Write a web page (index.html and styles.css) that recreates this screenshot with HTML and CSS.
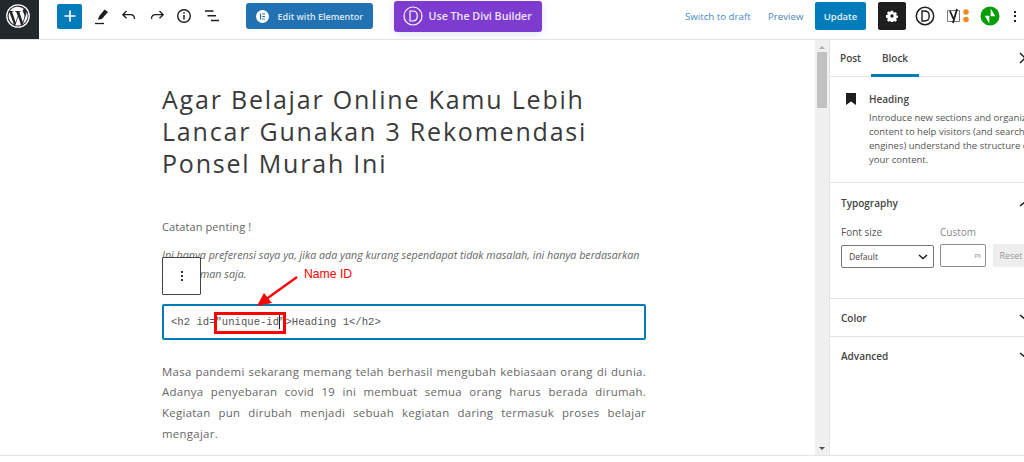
FILE: index.html
```html
<!DOCTYPE html>
<html lang="id">
<head>
<meta charset="utf-8">
<title>Edit Post</title>
<link rel="stylesheet" href="styles.css">
</head>
<body>
<div class="app">
  <header class="topbar">
    <div class="wp-logo">
      <svg width="26" height="26" viewBox="0 0 26 26"><circle cx="13" cy="13" r="11.2" fill="none" stroke="#fff" stroke-width="1.3"/><path fill="#fff" d="M3.6 13c0 3.7 2.2 6.9 5.3 8.500L4.400 9.200A9.400 9.400 0 0 0 3.600 13zm15.800-.5c0-1.200-.4-2-.8-2.600-.5-.8-.9-1.400-.9-2.100 0-.8.6-1.500 1.400-1.500h.1A9.400 9.400 0 0 0 5 8h.6c1 0 2.500-.1 2.500-.1.500 0 .6.700.1.800 0 0-.5.100-1.100.1l3.500 10.400 2.100-6.300-1.500-4.100c-.5 0-1-.1-1-.1-.5 0-.4-.8.1-.8 0 0 1.600.1 2.500.1 1 0 2.500-.1 2.500-.1.500 0 .6.700.1.800 0 0-.5.100-1.100.1l3.500 10.300 1-3.200c.4-1.300.7-2.200.7-3zM13.200 13.800l-2.900 8.400a9.400 9.400 0 0 0 5.800-.2l-.1-.1zm8.200-5.400c0 .3.100.6.100 1 0 1-.2 2-.7 3.300l-2.900 8.400a9.400 9.400 0 0 0 3.500-12.700z"/></svg>
    </div>
    <div class="tools">
      <button class="add-btn" aria-label="Add block"><svg width="14" height="14" viewBox="0 0 14 14"><path d="M7 1.500v11M1.500 7h11" stroke="#fff" stroke-width="1.700"/></svg></button>
      <span class="tool tool-first"><svg width="16" height="18" viewBox="0 0 16 18"><path fill="#1e1e1e" d="M10.600 2.500 14 5 8.300 11.600c-.6.700-2.200 1-4.300 1.200.4-1.900 1-3.300 1.500-4z"/><path stroke="#1e1e1e" stroke-width="1.300" d="M1 16.500h9"/></svg></span>
      <span class="tool"><svg width="16" height="14" viewBox="0 0 16 14"><path fill="none" stroke="#1e1e1e" stroke-width="1.300" d="M5.500 2 1.800 5.700l3.700 3.600M2 5.700h7.500c2.600 0 4 1.500 4 4.300"/></svg></span>
      <span class="tool"><svg width="16" height="14" viewBox="0 0 16 14"><path fill="none" stroke="#1e1e1e" stroke-width="1.300" d="M10.500 2l3.700 3.700-3.700 3.600M14 5.700H6.500c-2.600 0-4 1.500-4 4.300"/></svg></span>
      <span class="tool"><svg width="16" height="16" viewBox="0 0 16 16"><circle cx="8" cy="8" r="6.300" fill="none" stroke="#1e1e1e" stroke-width="1.400"/><path d="M8 7v4.500M8 4.200v1.600" stroke="#1e1e1e" stroke-width="1.500"/></svg></span>
      <span class="tool"><svg width="16" height="14" viewBox="0 0 16 14"><path d="M1 2h8.500M3.500 6.800h8.500M7 11.500h8" stroke="#1e1e1e" stroke-width="1.400"/></svg></span>
    </div>
    <button class="elementor-btn">
      <svg width="13" height="13" viewBox="0 0 13 13"><circle cx="6.500" cy="6.500" r="6.500" fill="#fff"/><path fill="#2271b1" d="M4 3.500h1.100v6H4zM6.200 3.500H9v1.100H6.200zM6.200 6H9v1.100H6.200zM6.200 8.400H9v1.100H6.200z"/></svg>
      <span>Edit with Elementor</span>
    </button>
    <button class="divi-btn">
      <svg width="20" height="20" viewBox="0 0 20 20"><circle cx="10" cy="10" r="9" fill="none" stroke="#fff" stroke-width="1.200"/><path fill="none" stroke="#fff" stroke-width="1.200" d="M7 5h2.700c3 0 4.600 2 4.600 5s-1.600 5-4.600 5H7z"/></svg>
      <span>Use The Divi Builder</span>
    </button>
    <div class="actions">
      <a class="link link-draft">Switch to draft</a>
      <a class="link link-preview">Preview</a>
      <button class="update-btn">Update</button>
      <button class="settings-btn" aria-label="Settings"><svg width="12" height="12" viewBox="0 0 16 16"><path fill="#fff" fill-rule="evenodd" d="M6.600 1h2.800l.4 2 1 .5 1.800-1 2 2-1 1.800.4 1 2 .4v2.600l-2 .4-.4 1 1 1.800-2 2-1.800-1-1 .4-.4 2H6.600l-.4-2-1-.4-1.800 1-2-2 1-1.800-.4-1-2-.4V6.700l2-.4.4-1-1-1.800 2-2 1.800 1 1-.5zM8 5.800a2.200 2.200 0 1 0 0 4.400 2.200 2.200 0 0 0 0-4.400z"/></svg></button>
      <span class="plugin plugin-divi"><svg width="20" height="20" viewBox="0 0 20 20"><circle cx="10" cy="10" r="8.700" fill="none" stroke="#1e1e1e" stroke-width="1.500"/><path fill="none" stroke="#1e1e1e" stroke-width="1.400" d="M7 5h2.500c3.200 0 4.700 2 4.700 5s-1.500 5-4.700 5H7z"/></svg></span>
      <span class="plugin plugin-yoast"><svg width="24" height="16" viewBox="0 0 24 16"><path fill="none" stroke="#777" stroke-width="1" d="M1.500 2.500h12v11h-12z"/><path fill="none" stroke="#1e1e1e" stroke-width="1.800" d="M4 3l3.500 8M11 1 7 15"/><circle cx="20" cy="4" r="2.800" fill="#f08a24"/><circle cx="20" cy="11.500" r="2.800" fill="#f08a24"/></svg></span>
      <span class="plugin plugin-jetpack"><svg width="20" height="20" viewBox="0 0 20 20"><circle cx="10" cy="10" r="9.500" fill="#069e08"/><path fill="#fff" d="M10.700 2.500v7.700h4.600zM9.300 17.500V9.800H4.700z"/></svg></span>
      <span class="more-v"><i></i><i></i><i></i></span>
    </div>
  </header>

  <div class="workspace">
    <main class="editor">
      <div class="column">
        <h1 class="post-title">Agar Belajar Online Kamu Lebih Lancar Gunakan 3 Rekomendasi Ponsel Murah Ini</h1>
        <p class="note">Catatan penting !</p>
        <p class="note-italic">Ini hanya preferensi saya ya, jika ada yang kurang sependapat tidak masalah, ini hanya berdasarkan pengalaman saja.</p>
        <div class="html-block"><code>&lt;h2 id="unique-id"&gt;Heading 1&lt;/h2&gt;</code></div>
        <p class="paragraph">Masa pandemi sekarang memang telah berhasil mengubah kebiasaan orang di dunia. Adanya penyebaran covid 19 ini membuat semua orang harus berada dirumah. Kegiatan pun dirubah menjadi sebuah kegiatan daring termasuk proses belajar mengajar.</p>
      </div>
      <div class="block-toolbar"><span></span><span></span><span></span></div>
      <div class="red-box"></div>
      <div class="caret"></div>
      <span class="name-id">Name ID</span>
      <svg class="red-arrow" width="45" height="32" viewBox="0 0 45 32"><path d="M42 1 10 24" stroke="#f00" stroke-width="2.200"/><path fill="#f00" d="M2 30 9 17l8 10z"/></svg>
    </main>
    <div class="scrollbar">
      <span class="arrow-up"></span>
      <span class="thumb"></span>
      <span class="arrow-down"></span>
    </div>
    <aside class="sidebar">
      <div class="tabs">
        <span class="tab">Post</span>
        <span class="tab tab-active">Block</span>
        <svg class="close" width="12" height="12" viewBox="0 0 12 12"><path d="M1 1l10 10M11 1 1 11" stroke="#1e1e1e" stroke-width="1.500"/></svg>
      </div>
      <section class="block-card">
        <svg class="bookmark" width="10" height="12" viewBox="0 0 10 12"><path fill="#1e1e1e" d="M0 0h10v12L5 8.500 0 12z"/></svg>
        <div>
          <h2 class="card-title">Heading</h2>
          <p class="card-desc">Introduce new sections and organize content to help visitors (and search engines) understand the structure of your content.</p>
        </div>
      </section>
      <section class="panel panel-typo">
        <div class="panel-head"><span>Typography</span><svg class="chev" width="14" height="8" viewBox="0 0 14 8"><path fill="none" stroke="#1e1e1e" stroke-width="1.500" d="M1 7l6-5 6 5"/></svg></div>
        <div class="typo-labels"><span class="lbl-size">Font size</span><span class="lbl-custom">Custom</span></div>
        <div class="typo-controls">
          <div class="select">Default<svg width="10" height="6" viewBox="0 0 10 6"><path fill="none" stroke="#1e1e1e" stroke-width="1.400" d="M1 1l4 3.500L9 1"/></svg></div>
          <div class="num"><span>PX</span></div>
          <div class="reset">Reset</div>
        </div>
      </section>
      <section class="panel panel-closed">
        <div class="panel-head"><span>Color</span><svg class="chev" width="14" height="8" viewBox="0 0 14 8"><path fill="none" stroke="#1e1e1e" stroke-width="1.500" d="M1 1l6 5 6-5"/></svg></div>
      </section>
      <section class="panel panel-closed panel-last">
        <div class="panel-head"><span>Advanced</span><svg class="chev" width="14" height="8" viewBox="0 0 14 8"><path fill="none" stroke="#1e1e1e" stroke-width="1.500" d="M1 1l6 5 6-5"/></svg></div>
      </section>
    </aside>
  </div>
  <footer class="statusbar"></footer>
</div>
</body>
</html>
```

FILE: styles.css
```css
* { box-sizing: border-box; }
html, body { margin: 0; height: 100%; overflow: hidden; background: #fff; }
body { font-family: "Open Sans", "Liberation Sans", sans-serif; color: #1e1e1e; }
button { font-family: inherit; border: 0; cursor: pointer; padding: 0; }
p, h1, h2 { margin: 0; }

.app { width: 1024px; height: 462px; display: flex; flex-direction: column; overflow: hidden; }

.topbar { height: 40px; flex: none; display: flex; align-items: center; border-bottom: 1px solid #e2e4e7; padding-bottom: 7px; }
.wp-logo { width: 39px; height: 39px; margin-bottom: -7px; padding: 3px 7px 10px 3px; background: #23282d; display: flex; align-items: center; justify-content: center; }
.tools { display: flex; align-items: center; margin-left: 18px; }
.add-btn { width: 25px; height: 25px; background: #007cba; border-radius: 2px; display: flex; align-items: center; justify-content: center; }
.tool { width: 27.500px; display: flex; justify-content: center; }
.tool-first { margin-left: 6px; }
.elementor-btn { margin-left: 20px; width: 127px; height: 26px; background: #2271b1; color: #dfe9f3; border-radius: 3px; font-size: 9px; font-weight: 600; display: flex; align-items: center; padding-left: 10px; gap: 9px; white-space: nowrap; }
.divi-btn { margin-left: 21px; width: 148px; height: 31px; background: #7e3bd0; color: #f0e6fa; border-radius: 3px; font-size: 10.700px; font-weight: 600; display: flex; align-items: center; padding-left: 9px; gap: 6px; white-space: nowrap; box-shadow: 0 2px 8px rgba(60,110,200,.18); }
.actions { display: flex; align-items: center; margin-left: auto; }
.link { color: #3f88c0; font-size: 9.700px; white-space: nowrap; }
.link-draft { width: 72px; }
.link-preview { margin-left: 11px; width: 35px; color: #4a7fb5; }
.update-btn { margin-left: 12px; width: 51px; height: 28px; background: #007cba; color: #e6f2f9; border-radius: 2px; font-size: 9.500px; font-weight: 600; }
.settings-btn { margin-left: 12px; width: 28px; height: 28px; background: #1e1e1e; border-radius: 2px; display: flex; align-items: center; justify-content: center; }
.plugin { display: flex; align-items: center; justify-content: center; }
.plugin-divi { margin-left: 7px; width: 24px; }
.plugin-yoast { margin-left: 9px; width: 24px; }
.plugin-jetpack { margin-left: 10px; width: 20px; }
.more-v { margin-left: 14px; margin-right: 8px; display: flex; flex-direction: column; gap: 2.500px; }
.more-v i { width: 2px; height: 2px; background: #1e1e1e; }

.workspace { flex: 1; display: flex; min-height: 0; }
.editor { width: 815px; flex: none; position: relative; overflow: hidden; }
.column { width: 484px; margin-left: 162px; padding-top: 43px; }
.post-title { font-family: "Open Sans", sans-serif; font-size: 25px; font-weight: 400; line-height: 32px; letter-spacing: 1.800px; color: #3a3a3a; width: 480px; }
.note { margin-top: 39px; font-size: 11px; line-height: 18px; color: #666; letter-spacing: .1px; }
.note-italic { margin-top: 10px; font-size: 10.700px; font-style: italic; line-height: 19px; color: #666; width: 484px; }
.html-block { margin-top: 20px; height: 36px; border: 2px solid #007cba; border-radius: 2px; display: flex; align-items: center; padding-left: 7px; }
.html-block code { font-family: "Liberation Mono", monospace; font-size: 10.600px; color: #555; }
.paragraph { margin-top: 21.500px; font-size: 11.400px; line-height: 20.700px; letter-spacing: .3px; color: #666; text-align: justify; }

.block-toolbar { position: absolute; left: 162px; top: 217px; width: 39px; height: 38px; background: #fff; border: 1px solid #444; border-radius: 1px; display: flex; flex-direction: column; align-items: center; justify-content: center; gap: 2px; }
.block-toolbar span { width: 2px; height: 2px; background: #333; }
.red-box { position: absolute; left: 214px; top: 272px; width: 72px; height: 22px; border: 3px solid #f00; }
.caret { position: absolute; left: 279px; top: 275px; width: 1px; height: 14px; background: #222; }
.name-id { position: absolute; left: 304px; top: 227px; font-family: "Liberation Sans", sans-serif; font-size: 12.200px; color: #f00; }
.red-arrow { position: absolute; left: 255px; top: 236px; }

.scrollbar { width: 14px; flex: none; background: #f0f0f0; display: flex; flex-direction: column; align-items: center; position: relative; }
.arrow-up { margin-top: 6px; width: 0; height: 0; border: 3px solid transparent; border-top: 0; border-bottom: 3px solid #b0b0b0; }
.thumb { margin-top: 3px; width: 10px; height: 56px; background: #c1c1c1; }
.arrow-down { margin-top: auto; margin-bottom: 5px; width: 0; height: 0; border: 3px solid transparent; border-bottom: 0; border-top: 3px solid #505050; }

.sidebar { width: 195px; flex: none; overflow: hidden; border-left: 1px solid #e2e4e7; font-size: 10px; }
.tabs { height: 37px; display: flex; align-items: center; border-bottom: 1px solid #e2e4e7; position: relative; padding-left: 10px; }
.tab { font-size: 10px; font-weight: 600; color: #444; height: 36px; line-height: 37px; }
.tab:first-child { width: 31px; }
.tab-active { width: 48px; text-align: center; border-bottom: 3px solid #007cba; height: 37px; }
.close { position: absolute; left: 189px; top: 12px; }
.block-card { width: 280px; height: 106px; display: flex; padding: 15px 0 0 16px; gap: 13px; border-bottom: 1px solid #e2e4e7; }
.bookmark { margin-top: 1px; flex: none; }
.card-title { font-size: 10px; font-weight: 600; line-height: 14px; color: #444; }
.card-desc { margin-top: 5px; width: 172px; font-size: 9.500px; line-height: 14px; color: #555; }
.panel { border-bottom: 1px solid #e2e4e7; }
.panel-last { border-bottom: 0; }
.panel-head { font-size: 10px; font-weight: 600; color: #444; display: flex; align-items: center; position: relative; padding-left: 11px; height: 38px; }
.chev { position: absolute; left: 189px; top: 15px; }
.panel-typo { height: 116px; padding-top: 1px; }
.panel-closed { height: 38px; }
.typo-labels { display: flex; font-size: 10px; color: #555; padding-left: 11px; margin-top: 3px; }
.lbl-size { width: 99px; }
.lbl-custom { color: #888; }
.typo-controls { display: flex; padding-left: 11px; margin-top: 6px; }
.select { flex: none; width: 93px; height: 23px; border: 1px solid #757575; border-radius: 2px; font-size: 8.500px; color: #444; display: flex; align-items: center; justify-content: space-between; padding: 0 5px 0 7px; }
.num { flex: none; margin-left: 6px; width: 46px; height: 23px; border: 1px solid #8d8d8d; border-radius: 2px; font-size: 5.500px; color: #888; display: flex; align-items: center; justify-content: flex-end; padding-right: 4px; margin-top: -1px; }
.reset { flex: none; margin-left: 7px; width: 36px; height: 23px; background: #eee; font-size: 9px; color: #999; display: flex; align-items: center; justify-content: center; border-radius: 2px; margin-top: -1px; }

.statusbar { height: 7px; flex: none; border-top: 1px solid #e2e4e7; }
```
